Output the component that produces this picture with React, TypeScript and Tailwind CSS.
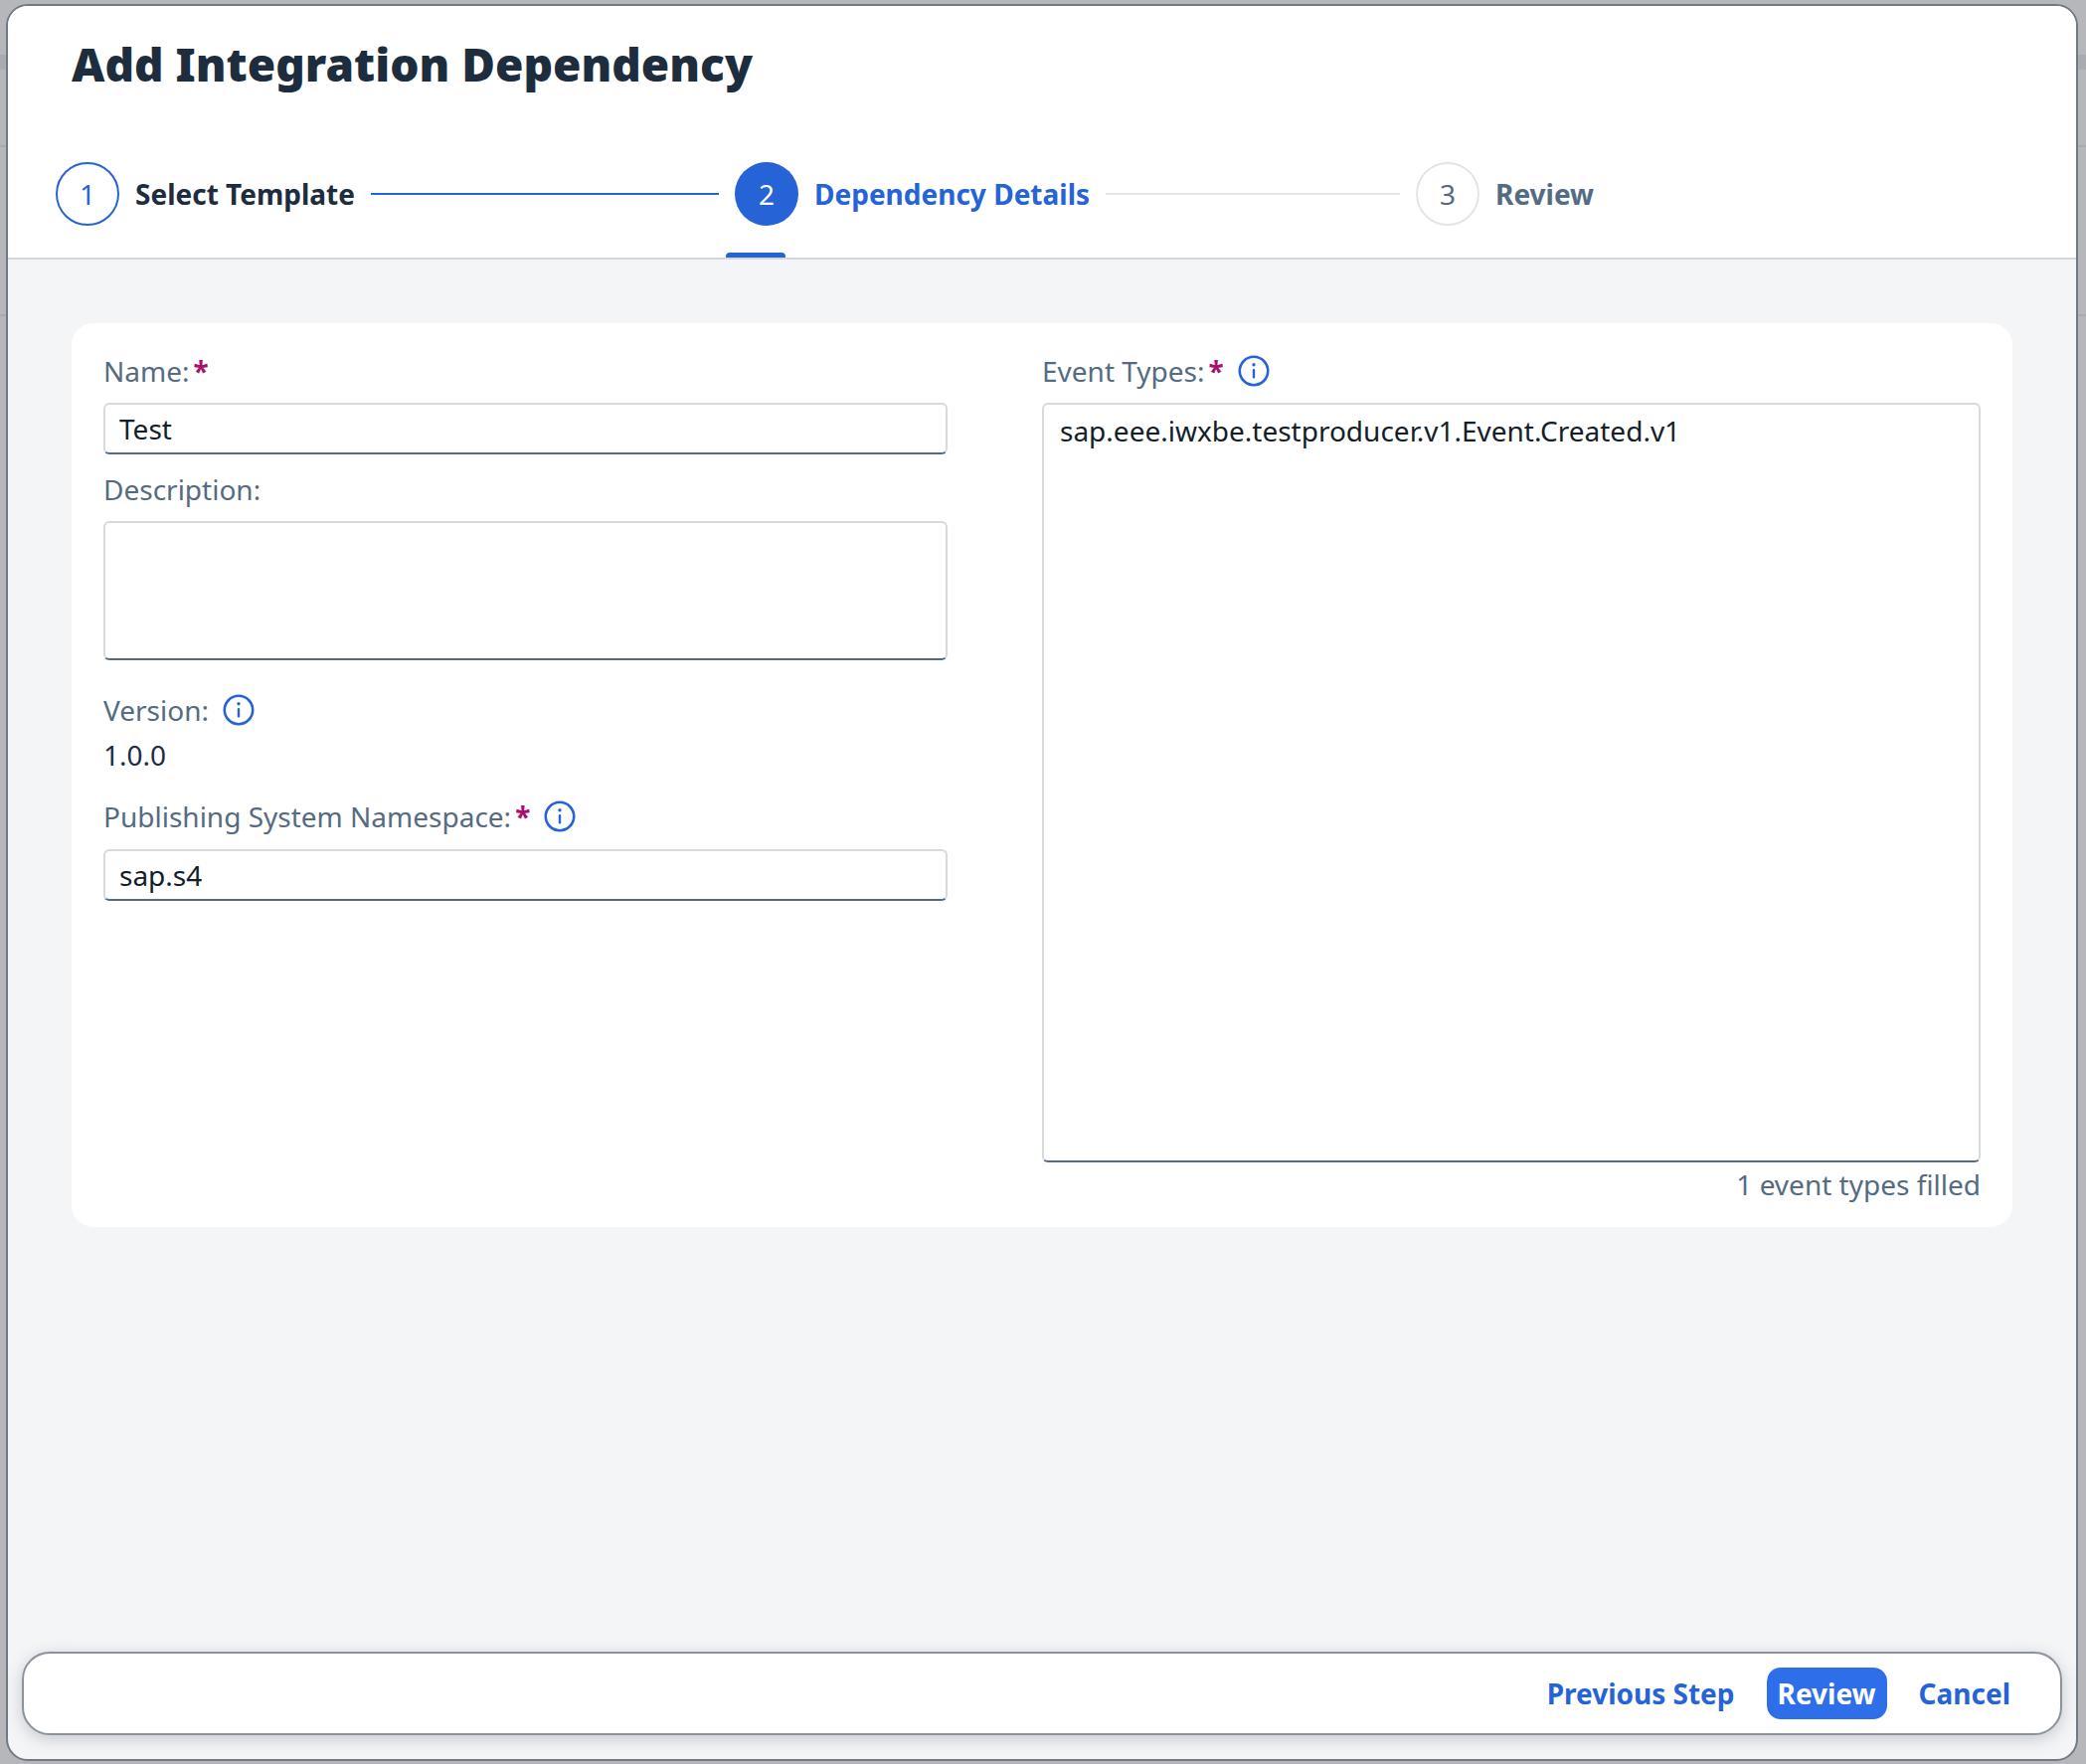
const font = "font-['Noto_Sans',sans-serif]";

function Info({ className = "" }: { className?: string }) {
  return (
    <svg viewBox="0 0 32 32" className={`w-[32px] h-[32px] ${className}`} fill="none">
      <circle cx="16" cy="16" r="14.2" stroke="#2563d6" strokeWidth="2.6" />
      <rect x="14.8" y="14" width="2.4" height="9.5" rx="1" fill="#2563d6" />
      <circle cx="16" cy="9.8" r="1.7" fill="#2563d6" />
    </svg>
  );
}

function Label({ text, required, info }: { text: string; required?: boolean; info?: boolean }) {
  return (
    <div className="flex items-center h-[32px] text-[28px] leading-[32px] text-[#556b82]">
      <span>{text}</span>
      {required && <span className="ml-[4px] text-[#aa0e6b] font-bold">*</span>}
      {info && <Info className="ml-[14px]" />}
    </div>
  );
}

function Input({ value }: { value: string }) {
  return (
    <div className="h-[52px] rounded-[6px] border-2 border-[#d5dadd] border-b-[#556b82] bg-white px-[14px] flex items-center text-[28px] text-[#131e29]">
      {value}
    </div>
  );
}

function Step({ n, label, state }: { n: number; label: string; state: "done" | "active" | "todo" }) {
  const circle =
    state === "done"
      ? "border-2 border-[#2563d6] text-[#2563d6] bg-white"
      : state === "active"
        ? "bg-[#2563d6] text-white"
        : "border-2 border-[#e3e5e8] text-[#556b82] bg-white";
  const text = state === "done" ? "text-[#1d2d3e]" : state === "active" ? "text-[#2563d6]" : "text-[#556b82]";
  return (
    <div className="relative flex items-center h-[64px] shrink-0">
      <div className={`w-[64px] h-[64px] rounded-full flex items-center justify-center text-[28px] ${circle}`}>{n}</div>
      <span className={`ml-[16px] text-[28px] font-bold ${text}`}>{label}</span>
    </div>
  );
}

const rows = [
  { h: 55, cls: "" },
  { h: 15, cls: "bg-[#a9abb0]" },
  { h: 78, cls: "border-b-2 border-[#a9abaf]", text: "e", color: "text-[#2a55a8]", pt: 20 },
  { h: 170, cls: "border-b-2 border-[#a9abaf]", text: "a", color: "text-[#131e29] font-bold", pt: 44 },
];

export default function App() {
  return (
    <div className={`relative w-[2098px] h-[1774px] overflow-hidden bg-[#b6b7ba] ${font}`}>
      <div className="flex flex-col">
        {rows.map((r, i) => (
          <div key={i} style={{ height: r.h }} className={r.cls} />
        ))}
      </div>

      <div className="absolute left-[6px] top-[4px] w-[2084px] h-[1767px] rounded-[22px] border-2 border-[#6f7a85] overflow-hidden flex flex-col bg-[#f4f5f7]">
        <div className="relative h-[255px] shrink-0 bg-white border-b-2 border-[#d5d7da]">
          <h1 className="ml-[64px] pt-[30px] text-[46px] leading-[56px] font-black text-[#1d2d3e]">
            Add Integration Dependency
          </h1>
          <div className="absolute left-[48px] top-[157px] flex items-center">
            <Step n={1} label="Select Template" state="done" />
            <div className="ml-[16px] mr-[16px] w-[350px] h-[2px] bg-[#2563d6]" />
            <Step n={2} label="Dependency Details" state="active" />
            <div className="ml-[16px] mr-[16px] w-[296px] h-[2px] bg-[#e3e5e8]" />
            <Step n={3} label="Review" state="todo" />
          </div>
          <div className="absolute left-[722px] bottom-0 w-[60px] h-[5px] rounded-t-[4px] bg-[#2563d6]" />
        </div>

        <div className="flex-1 relative px-[64px] pt-[64px]">
          <div className="h-[909px] rounded-[22px] bg-white px-[32px] pt-[32px] grid grid-cols-[849px_944px] gap-x-[95px]">
            <div className="flex flex-col">
              <Label text="Name:" required />
              <div className="mt-[16px]"><Input value="Test" /></div>
              <div className="mt-[19px]"><Label text="Description:" /></div>
              <div className="mt-[16px] h-[140px] rounded-[6px] border-2 border-[#d5dadd] border-b-[#556b82]" />
              <div className="mt-[34px]"><Label text="Version:" info /></div>
              <div className="mt-[13px] text-[28px] leading-[32px] text-[#1d2d3e]">1.0.0</div>
              <div className="mt-[30px]"><Label text="Publishing System Namespace:" required info /></div>
              <div className="mt-[17px]"><Input value="sap.s4" /></div>
            </div>
            <div className="flex flex-col">
              <Label text="Event Types:" required info />
              <div className="mt-[16px] h-[764px] rounded-[6px] border-2 border-[#d5dadd] border-b-[#556b82] px-[16px] py-[8px] text-[28px] leading-[36px] text-[#131e29]">
                sap.eee.iwxbe.testproducer.v1.Event.Created.v1
              </div>
              <div className="mt-[6px] text-right text-[28px] leading-[32px] text-[#556b82]">1 event types filled</div>
            </div>
          </div>

          <div className="absolute left-[14px] right-[14px] bottom-[24px] h-[84px] rounded-[28px] border-2 border-[#8a929c] bg-white shadow-[0_4px_16px_rgba(60,70,85,0.25)] flex items-center justify-end pr-[50px] text-[28px] font-bold text-[#2563d6]">
            <span>Previous Step</span>
            <span className="ml-[32px] h-[52px] w-[121px] rounded-[14px] bg-[#2f6ee9] text-white flex items-center justify-center">Review</span>
            <span className="ml-[32px]">Cancel</span>
          </div>
        </div>
      </div>
    </div>
  );
}
